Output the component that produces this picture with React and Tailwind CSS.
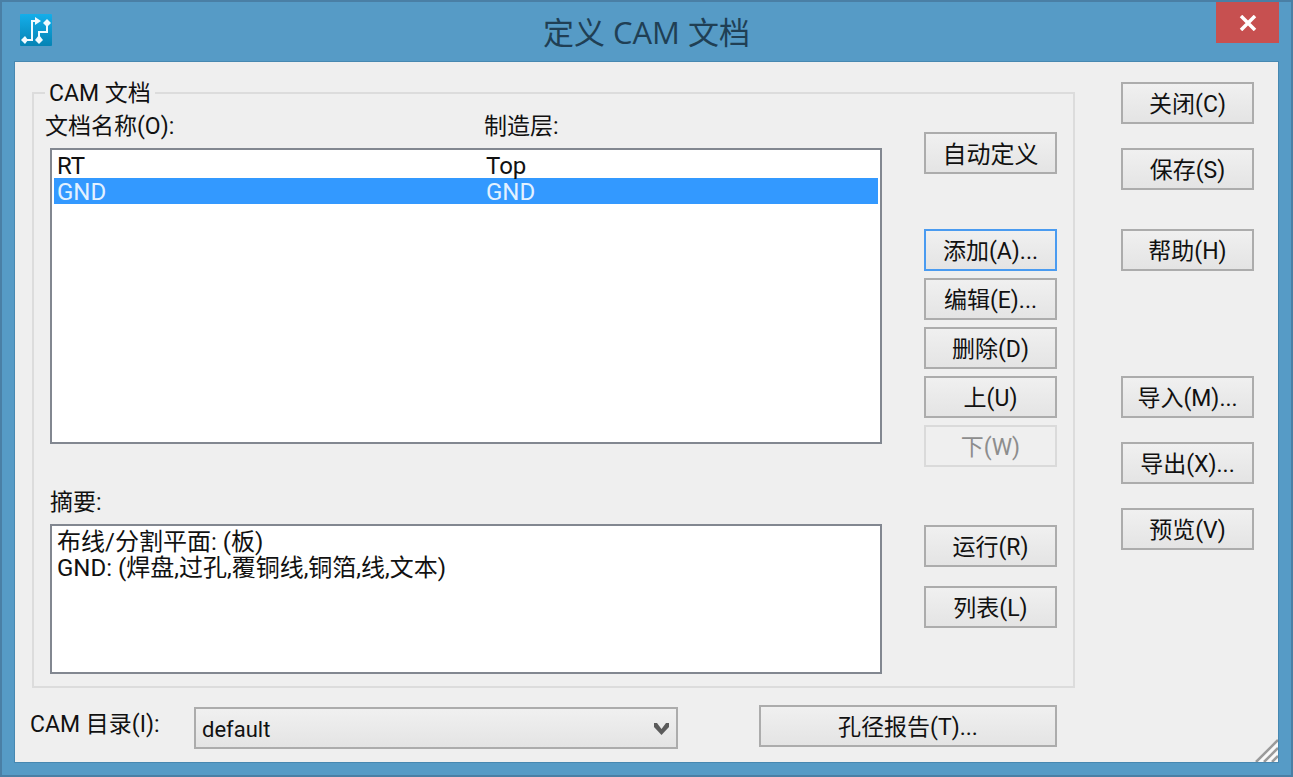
import { useState } from "react";

const documents = [
  { name: "RT", layer: "Top" },
  { name: "GND", layer: "GND" },
];

const summary = "布线/分割平面: (板)\nGND: (焊盘,过孔,覆铜线,铜箔,线,文本)";

function DialogButton({ children, className = "", primary, disabled }) {
  let look = "border-[#acacac] bg-linear-to-b from-[#f0f0f0] to-[#e4e4e4]";
  if (primary) look = "border-[#4a9bf0] bg-linear-to-b from-[#f0f0f0] to-[#e4e4e4]";
  if (disabled) look = "border-[#dadada] bg-[#efefef] text-[#8d8d8d]";

  return (
    <button
      type="button"
      disabled={disabled}
      className={`h-[42px] shrink-0 border-2 pt-1 whitespace-nowrap ${look} ${className}`}
    >
      {children}
    </button>
  );
}

function AppIcon() {
  return (
    <svg width="32" height="32" viewBox="0 0 32 32" aria-hidden="true">
      <defs>
        <linearGradient id="app-icon" x1="0" y1="0" x2="0" y2="1">
          <stop offset="0" stopColor="#14aeea" />
          <stop offset="1" stopColor="#0583b4" />
        </linearGradient>
      </defs>
      <rect width="32" height="32" rx="1" fill="url(#app-icon)" />
      <g fill="none" stroke="#f2fbff" strokeWidth="2">
        <path d="M5 26H12V7H17" />
        <path d="M19 26V18H27V10" />
      </g>
      <g fill="#f2fbff">
        <path d="M1 26l4-4 3 4-3 4z" />
        <path d="M15 3l6 4-6 4z" />
        <path d="M19 21l4 5-4 4-4-4z" />
        <path d="M27 5l4 4-4 4-4-4z" />
      </g>
    </svg>
  );
}

function TitleBar() {
  return (
    <header className="relative flex h-[60px] items-center justify-center">
      <div className="absolute top-3 left-[18px]">
        <AppIcon />
      </div>
      <h1 className="font-['Open_Sans','Noto_Sans_CJK_SC',sans-serif] text-[31px] text-[#203f54]">
        定义 CAM 文档
      </h1>
      <button
        type="button"
        aria-label="关闭"
        className="absolute top-0 right-3 flex h-[41px] w-[63px] items-center justify-center bg-[#c75050]"
      >
        <svg width="18" height="16" viewBox="0 0 18 16" aria-hidden="true">
          <path d="M2 1L16 15M16 1L2 15" stroke="#fff" strokeWidth="3.500" />
        </svg>
      </button>
    </header>
  );
}

function DocumentTable() {
  const [selected, setSelected] = useState(1);

  return (
    <table className="block w-full">
      <thead className="block h-[37px]">
        <tr className="grid grid-cols-[439px_1fr] text-left">
          <th className="-ml-[5px] p-0 pt-0.5 font-normal">文档名称(O):</th>
          <th className="-ml-[5px] p-0 pt-0.5 font-normal">制造层:</th>
        </tr>
      </thead>
      <tbody className="block h-[296px] border-2 border-[#828790] bg-white p-0.5 text-[24px]">
        {documents.map((doc, i) => (
          <tr
            key={doc.name}
            onClick={() => setSelected(i)}
            className={`grid h-[26px] grid-cols-[429px_1fr] pl-[3px] leading-7 ${
              i === selected ? "bg-[#3399ff] text-[#e3f1ff]" : ""
            }`}
          >
            <td>{doc.name}</td>
            <td>{doc.layer}</td>
          </tr>
        ))}
      </tbody>
    </table>
  );
}

function DocumentGroup() {
  return (
    <fieldset className="flex border-2 border-[#dcdcdc] pr-4 pb-3 pl-4">
      <legend className="-ml-[5px] px-1 pt-0.5 leading-[26px]">CAM 文档</legend>

      <div className="flex flex-1 gap-[42px]">
        <div className="flex flex-1 flex-col pt-1">
          <DocumentTable />
          <label htmlFor="summary" className="mt-[45px] h-[35px] leading-7">
            摘要:
          </label>
          <textarea
            id="summary"
            readOnly
            value={summary}
            className="block h-[150px] w-full resize-none border-2 border-[#828790] bg-white px-[5px] py-[3px] text-[24px] leading-[26px] outline-none"
          />
        </div>

        <div className="flex w-[133px] flex-col pt-[25px]">
          <DialogButton className="text-[24px]">自动定义</DialogButton>
          <div className="mt-[55px] flex flex-col gap-[7px]">
            <DialogButton primary>添加(A)...</DialogButton>
            <DialogButton>编辑(E)...</DialogButton>
            <DialogButton>删除(D)</DialogButton>
            <DialogButton>上(U)</DialogButton>
            <DialogButton disabled>下(W)</DialogButton>
          </div>
          <div className="mt-[58px] flex flex-col gap-[19px]">
            <DialogButton>运行(R)</DialogButton>
            <DialogButton>列表(L)</DialogButton>
          </div>
        </div>
      </div>
    </fieldset>
  );
}

function DirectoryRow() {
  return (
    <div className="mt-[17px] flex items-start pr-[18px]">
      <label htmlFor="directory" className="-ml-0.5 w-[164px] pt-0.5 leading-9">
        CAM 目录(I):
      </label>
      <div className="relative mt-0.5 flex-1">
        <select
          id="directory"
          defaultValue="default"
          className="h-[42px] w-full appearance-none border-2 border-[#acacac] bg-linear-to-b from-[#f0f0f0] to-[#e4e4e4] pt-1 pl-1.5 text-[22px]"
        >
          <option value="default">default</option>
        </select>
        <svg
          className="pointer-events-none absolute top-[15px] right-2"
          width="17"
          height="14"
          viewBox="0 0 17 14"
          aria-hidden="true"
        >
          <path d="M1 1H4L8.500 7L13 1H16V5L8.500 13L1 5z" fill="#5b5b5b" />
        </svg>
      </div>
      <DialogButton className="ml-[81px] w-[298px]">孔径报告(T)...</DialogButton>
    </div>
  );
}

export default function App() {
  return (
    <div className="flex min-h-screen flex-col border-2 border-[#4a7fa5] bg-[#569bc6] font-[Roboto,'Noto_Sans_CJK_SC',sans-serif] text-[23px] leading-7 text-[#111]">
      <TitleBar />

      <main className="relative mx-[13px] mb-[13px] flex flex-1 gap-[46px] bg-[#efefef] pt-[17px] pr-6 pl-[17px] shadow-[0_0_0_1px_#4788b1]">
        <div className="flex-1">
          <DocumentGroup />
          <DirectoryRow />
        </div>

        <div className="flex w-[133px] flex-col pt-[3px]">
          <DialogButton>关闭(C)</DialogButton>
          <DialogButton className="mt-6">保存(S)</DialogButton>
          <DialogButton className="mt-[39px]">帮助(H)</DialogButton>
          <div className="mt-[105px] flex flex-col gap-6">
            <DialogButton>导入(M)...</DialogButton>
            <DialogButton>导出(X)...</DialogButton>
            <DialogButton>预览(V)</DialogButton>
          </div>
        </div>

        {/* resize grip */}
        <svg
          className="absolute right-0 bottom-0"
          width="24"
          height="24"
          viewBox="0 0 24 24"
          aria-hidden="true"
        >
          <path d="M1 24L24 1V24z" fill="#fafafa" />
          <path d="M2 24L24 2M10 24L24 10M18 24L24 18" stroke="#9b9b9b" strokeWidth="2.500" />
        </svg>
      </main>
    </div>
  );
}
